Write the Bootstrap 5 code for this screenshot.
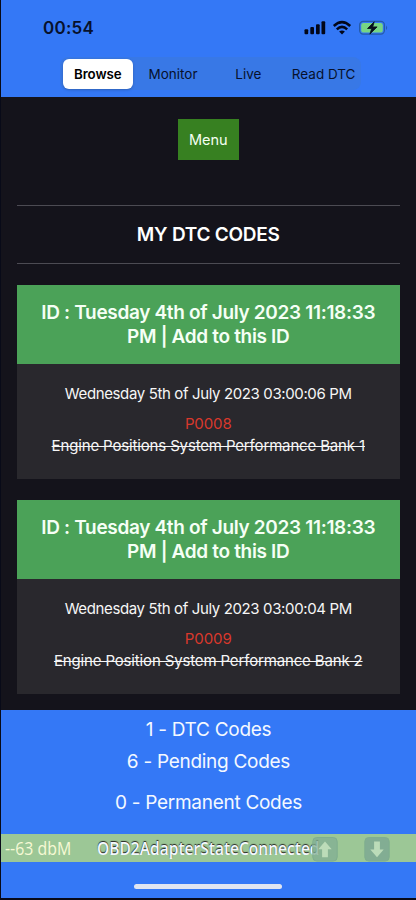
<!DOCTYPE html>
<html lang="en">
<head>
<meta charset="utf-8">
<meta name="viewport" content="width=device-width, initial-scale=1">
<title>DTC Codes</title>
<link href="https://cdn.jsdelivr.net/npm/bootstrap@5.3.0/dist/css/bootstrap.min.css" rel="stylesheet">
<style>
body{font-family:Inter,"Liberation Sans",sans-serif;background:#000;color:#fff}
.phone{width:416px;height:900px;padding:0 0 2px 1px;background:#080a18}
.top-bar{height:97px;background:#3478f6;color:#07112c}
.status{height:57px;padding:0 26px 0 42px}
.clock{font-size:17px;font-weight:600;letter-spacing:.25px;line-height:57px}
.segments{width:301px;height:33px;margin-left:59px;background:#3878e6;border-radius:8px;padding:1.5px 2.5px;font-size:13.5px;gap:4.8px}
.segments .nav-link{flex:0 0 70.5px;padding:0;line-height:30px;color:#07112c;border-radius:6px!important;text-align:center;white-space:nowrap}
.segments .nav-link.active{background:#fff;color:#000;font-weight:600;font-size:13.3px;letter-spacing:-.1px;box-shadow:0 1px 3px #0003}
.content{height:612.5px;background:#14131b;padding:22px 16px 0 15.5px}
.menu-btn{width:60.5px;height:41px;background:#378021;color:#f5fff2;border:0;border-radius:0;padding:1px 0 0;font-size:14.5px}
.title{margin-top:44.5px;height:59px;border:solid #4c4b53;border-width:1px 0;font-size:19px;font-weight:600;line-height:57px;letter-spacing:-.25px;margin-bottom:21.5px}
.code-card{height:194px;border:0;border-radius:0;background:#29282d;color:#f6f6f6;margin-bottom:21.2px}
.code-card .card-header{height:78.5px;background:#4ba258;color:#f5fff5;border:0;border-radius:0;padding:16.3px 0 0;font-size:19px;line-height:23.5px;font-weight:600;letter-spacing:-.33px}
.code-card .card-body{padding:19.5px 0 0;font-size:15px;line-height:22px}
.date{letter-spacing:-.37px}
.fault{color:#d9382c;margin-top:8px;letter-spacing:-.1px}
.strike{text-decoration:line-through;text-decoration-thickness:1px;letter-spacing:-.15px}
.summary{height:188.5px;background:#3478f6;color:#f4f8ff;font-size:19px;line-height:24px;padding-top:8px;letter-spacing:-.28px}
.permanent{margin-top:17.5px}
.adapter{height:28.5px;margin-top:18.5px;background:#9cc796;font-family:"Open Sans",sans-serif;position:relative;letter-spacing:0}
.narrow{display:inline-block;transform-origin:0 50%;white-space:nowrap;line-height:28px}
.signal{position:absolute;left:4px;color:#f6f9d4;font-size:19px;transform:scaleX(.835)}
.state{position:absolute;left:96px;font-size:18.5px;font-weight:600;transform:scaleX(.84);text-shadow:0 -1px 1px #222}
.arrow{position:absolute;top:3px}
.arrow-up{left:311px}
.arrow-down{left:362.5px}
.home{width:148px;height:5px;border-radius:3px;background:#e0e5f1;margin:22px 0 0 133px}
</style>
<script src="https://cdn.jsdelivr.net/npm/bootstrap@5.3.0/dist/js/bootstrap.bundle.min.js"></script>
</head>
<body>
<div class="phone overflow-hidden">
<header class="top-bar">
  <div class="status d-flex justify-content-between align-items-center">
    <span class="clock">00:54</span>
    <svg width="86" height="18" viewBox="0 0 86 18" class="mb-1">
      <g fill="#020719"><rect x=".5" y="11.3" width="3.7" height="5" rx="1"/><rect x="6.3" y="9.1" width="3.7" height="7.2" rx="1"/><rect x="12" y="6.3" width="3.7" height="10" rx="1"/><rect x="17.5" y="3.3" width="3.7" height="13" rx="1"/></g>
      <g fill="none" stroke="#020719" stroke-width="2.5"><path d="M29.8 8Q38 .3 46.2 8"/><path d="M32.8 11.3Q38 6.5 43.2 11.3"/></g><path fill="#020719" d="M35.1 13.5Q38 11.3 40.9 13.5L38 16.5Z"/>
      <rect x="55.6" y="3.4" width="24.8" height="12.8" rx="3.6" fill="none" stroke="#245aa9" stroke-width="1.2"/><rect x="57.2" y="5" width="21.6" height="9.6" rx="2.2" fill="#76d584"/><path d="M82.1 7.5v4.6q2.2-2.3 0-4.6" fill="#245aa9"/>
      <path d="M70.2 3.8 63.5 10.5h4.2l-1.8 5.6 7.2-7.2h-4.4z" fill="#07101c" stroke="#07101c" stroke-width=".8" stroke-linejoin="round"/>
    </svg>
  </div>
  <nav class="segments nav nav-pills flex-nowrap">
    <a class="nav-link active" href="#">Browse</a><a class="nav-link" href="#">Monitor</a><a class="nav-link" href="#">Live</a><a class="nav-link" href="#">Read DTC</a>
  </nav>
</header>
<main class="content text-center">
  <button class="btn menu-btn">Menu</button>
  <h1 class="title">MY DTC CODES</h1>
  <article class="card code-card">
    <h2 class="card-header mb-0"><span>ID : Tuesday 4th of July 2023 11:18:33</span><br><span>PM | Add to this ID</span></h2>
    <div class="card-body"><div class="date">Wednesday 5th of July 2023 03:00:06 PM</div><div class="fault">P0008</div><div><span class="strike">Engine Positions System Performance Bank 1</span></div></div>
  </article>
  <article class="card code-card">
    <h2 class="card-header mb-0"><span>ID : Tuesday 4th of July 2023 11:18:33</span><br><span>PM | Add to this ID</span></h2>
    <div class="card-body"><div class="date">Wednesday 5th of July 2023 03:00:04 PM</div><div class="fault">P0009</div><div><span class="strike">Engine Position System Performance Bank 2</span></div></div>
  </article>
</main>
<footer class="summary text-center">
  <div>1 - DTC Codes</div><div class="mt-2">6 - Pending Codes</div><div class="permanent">0 - Permanent Codes</div>
  <div class="adapter text-start">
    <span class="narrow signal">--63 dbM</span><span class="narrow state">OBD2AdapterStateConnected</span>
    <svg class="arrow arrow-up" width="26" height="25" viewBox="0 0 26 25"><rect x=".8" y=".5" width="24.4" height="23.6" rx="4" fill="#82ad93" fill-opacity=".75" stroke="#7fae8f"/><path d="M13 4.5 19.7 12.2h-3.8v8h-5.8v-8H6.3z" fill="#bcdcb9"/></svg>
    <svg class="arrow arrow-down" width="26" height="25" viewBox="0 0 26 25"><rect x=".8" y=".5" width="24.4" height="23.6" rx="4" fill="#82ad93" stroke="#7fae8f"/><path d="M13 20.2 19.7 12.5h-3.8v-8h-5.8v8H6.3z" fill="#bcdcb9"/></svg>
  </div>
  <div class="home"></div>
</footer>
</div>
</body>
</html>
